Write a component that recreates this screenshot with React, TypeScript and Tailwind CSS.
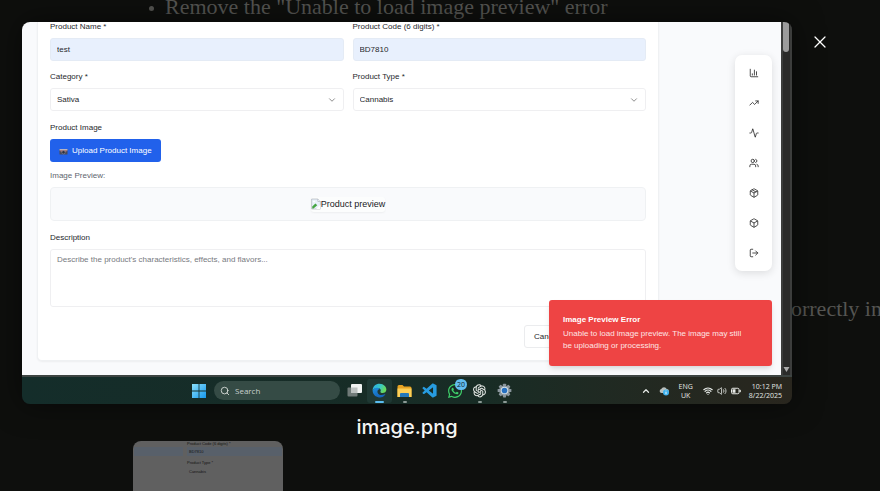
import type { ReactNode } from "react";
import {
  Activity,
  Box,
  ChartColumn,
  ChevronDown,
  ChevronUp,
  LogOut,
  Package,
  Search,
  TrendingUp,
  Users,
  Volume2,
  Wifi,
  X,
} from "lucide-react";
import { AiOutlineOpenAI } from "react-icons/ai";
import { BiLogoVisualStudio } from "react-icons/bi";
import { FaWhatsapp } from "react-icons/fa";

function Field({ id, label, children }: { id: string; label: string; children: ReactNode }) {
  return (
    <div className="flex flex-col gap-[6px]">
      <label htmlFor={id} className="text-[#26282c]">
        {label}
      </label>
      {children}
    </div>
  );
}

function TextField({ id, label, value }: { id: string; label: string; value: string }) {
  return (
    <Field id={id} label={label}>
      <input
        id={id}
        defaultValue={value}
        className="h-[23px] w-full rounded-[3px] border border-[#e4ebf5] bg-[#e8f0fd] px-[6px] text-[#26282c] outline-none"
      />
    </Field>
  );
}

function SelectField({ id, label, value }: { id: string; label: string; value: string }) {
  return (
    <Field id={id} label={label}>
      <div className="relative">
        <select
          id={id}
          className="h-[23px] w-full appearance-none rounded-[3px] border border-[#efeff1] bg-white px-[6px] text-[#26282c] outline-none"
        >
          <option>{value}</option>
        </select>
        <ChevronDown
          size={10}
          className="pointer-events-none absolute top-[7px] right-[7px] text-[#777]"
        />
      </div>
    </Field>
  );
}

function CameraIcon() {
  return (
    <svg width="9" height="9" viewBox="0 0 18 18" aria-hidden="true">
      <rect x="1" y="6" width="16" height="11" rx="1" fill="#4a4a58" />
      <rect x="1" y="6" width="16" height="3" fill="#b9b4c0" />
      <rect x="3" y="9" width="12" height="2" fill="#d27a72" />
      <circle cx="9" cy="12.5" r="3.4" fill="#2d3042" stroke="#9aa0b5" />
    </svg>
  );
}

function BrokenImageIcon() {
  return (
    <svg width="10" height="12" viewBox="0 0 16 18" aria-hidden="true">
      <path d="M1 1h10l4 4v12H1z" fill="#e8f0fb" stroke="#a7adb5" />
      <path d="M11 1v4h4" fill="#fff" stroke="#a7adb5" />
      <path d="M2 13l5-5 3 3-6 5H2z" fill="#45a543" />
      <path d="M8 17l7-7v7z" fill="#fff" />
      <path d="M3 5c1-2 4-1 4 1H3z" fill="#fff" />
    </svg>
  );
}

function ProductForm() {
  return (
    <form className="min-w-0 flex-1 rounded-b-[5px] border-x border-b border-[#eff1f3] bg-white px-[12px] pb-[12px] text-[8px] leading-[10px] shadow-xs">
      <div className="grid grid-cols-2 gap-x-[9px] gap-y-[11px]">
        <TextField id="name" label="Product Name *" value="test" />
        <TextField id="code" label="Product Code (6 digits) *" value="BD7810" />
        <SelectField id="category" label="Category *" value="Sativa" />
        <SelectField id="type" label="Product Type *" value="Cannabis" />
      </div>

      <p className="mt-[12px] text-[#26282c]">Product Image</p>
      <button
        type="button"
        className="mt-[6px] flex h-[23px] items-center gap-[4px] rounded-[3px] bg-[#2161eb] px-[9px] text-white"
      >
        <CameraIcon />
        Upload Product Image
      </button>
      <p className="mt-[9px] text-[#60656e]">Image Preview:</p>
      <div className="mt-[6px] flex h-[34px] items-center justify-center rounded-[4px] border border-[#eff1f3] bg-[#f9fafc]">
        <div className="flex h-[15px] items-center rounded-[3px] bg-[#fcfdfd] text-[9px] text-[#202124] shadow-xs">
          <BrokenImageIcon />
          Product preview
        </div>
      </div>

      <div className="mt-[12px]">
        <Field id="description" label="Description">
          <textarea
            id="description"
            placeholder="Describe the product's characteristics, effects, and flavors..."
            className="block h-[58px] w-full resize-none rounded-[3px] border border-[#efeff1] bg-white px-[6px] py-[5px] outline-none placeholder:text-[#777a80]"
          />
        </Field>
      </div>

      <div className="mt-[18px] flex justify-end">
        <button
          type="button"
          className="h-[23px] w-[122px] rounded-[3px] border border-[#ebecee] bg-white px-[9px] text-left text-[#26282c]"
        >
          Cancel
        </button>
      </div>
    </form>
  );
}

const sideLinks = [
  { name: "Dashboard", Icon: ChartColumn },
  { name: "Trends", Icon: TrendingUp },
  { name: "Activity", Icon: Activity },
  { name: "Users", Icon: Users },
  { name: "Orders", Icon: Package },
  { name: "Products", Icon: Box },
  { name: "Log out", Icon: LogOut },
];

function SideNav() {
  return (
    <nav className="mt-[33px] mr-[9px] ml-[76px] flex w-[37px] flex-col self-start rounded-[7px] bg-white py-[3px] shadow-[0_2px_8px_rgba(0,0,0,0.12)]">
      {sideLinks.map(({ name, Icon }) => (
        <a
          key={name}
          href="#"
          aria-label={name}
          className="flex h-[30px] items-center justify-center text-[#2b2b2b]"
        >
          <Icon size={10} strokeWidth={2} />
        </a>
      ))}
    </nav>
  );
}

function Toast() {
  return (
    <div
      role="alert"
      className="absolute right-[9px] bottom-[9px] w-[223px] rounded-[3px] bg-[#ee4444] px-[14px] py-[14px] text-[8px] leading-[12px] text-[#fde4e4] shadow-md"
    >
      <p className="mb-[2px] font-bold text-white">Image Preview Error</p>
      <p>
        Unable to load image preview. The image may still
        <br />
        be uploading or processing.
      </p>
    </div>
  );
}

function WindowsLogo() {
  return (
    <svg width="14" height="14" viewBox="0 0 14 14" aria-hidden="true">
      <defs>
        <linearGradient id="win" x1="0" y1="0" x2="1" y2="1">
          <stop offset="0" stopColor="#8be0fb" />
          <stop offset="1" stopColor="#1597ec" />
        </linearGradient>
      </defs>
      <path d="M0 0h6.6v6.6H0zM7.4 0H14v6.6H7.4zM0 7.4h6.6V14H0zM7.4 7.4H14V14H7.4z" fill="url(#win)" />
    </svg>
  );
}

function TaskViewIcon() {
  return (
    <svg width="15" height="15" viewBox="0 0 15 15" aria-hidden="true">
      <rect x="0.5" y="4.5" width="10" height="9" rx="1" fill="#707a78" />
      <rect x="4" y="1" width="11" height="9" rx="1" fill="#f1f3f2" />
      <rect x="4" y="4.5" width="6.5" height="5.5" fill="#bcc1c0" />
    </svg>
  );
}

function EdgeLogo() {
  return (
    <svg width="15" height="15" viewBox="0 0 24 24" aria-hidden="true">
      <defs>
        <linearGradient id="edgeTop" x1="0" y1="0" x2="1" y2="0.4">
          <stop offset="0" stopColor="#27a8e8" />
          <stop offset="0.6" stopColor="#3bc9c1" />
          <stop offset="1" stopColor="#69d95a" />
        </linearGradient>
        <linearGradient id="edgeBody" x1="0" y1="0" x2="0.6" y2="1">
          <stop offset="0" stopColor="#1d90dd" />
          <stop offset="1" stopColor="#1562b8" />
        </linearGradient>
      </defs>
      <path d="M1 12C1 5 6 1 12 1c7 0 11 5 11 9.5 0 4-3 5.500-6 5.500-2.500 0-4-1-3.500-2 1.500-3 0-6-4.500-6-4 0-7 2-8 4z" fill="url(#edgeTop)" />
      <path d="M1 12c1-3 4-5 8-4.500 2 .3 3 1 3.500 2C9.500 10 8 12.500 9 15.500c1.200 3.500 6 5 11.500 2.500.8-.3 1 .2.600.8C18 23 14 23.500 11 23 5 22.300 1 17.500 1 12z" fill="url(#edgeBody)" />
    </svg>
  );
}

function FolderIcon() {
  return (
    <svg width="15" height="14" viewBox="0 0 15 14" aria-hidden="true">
      <path d="M0.5 2.5a1.500 1.500 0 0 1 1.500-1.500h3.500l1.500 1.500h6a1.500 1.500 0 0 1 1.500 1.500v9h-14z" fill="#e7a323" />
      <path d="M0.5 4.5h14V13h-14z" fill="#fccf57" />
      <path d="M3 13v-3a1 1 0 0 1 1-1h7a1 1 0 0 1 1 1v3z" fill="#2378ba" />
    </svg>
  );
}

function GearIcon() {
  return (
    <svg width="15" height="15" viewBox="0 0 24 24" aria-hidden="true">
      <g fill="#8b969d">
        <circle cx="12" cy="12" r="8.5" />
        {[0, 45, 90, 135].map((a) => (
          <rect key={a} x="9.5" y="1" width="5" height="22" rx="1" transform={`rotate(${a} 12 12)`} />
        ))}
      </g>
      <circle cx="12" cy="12" r="6" fill="#d8e3e9" />
      <circle cx="12" cy="12" r="4.5" fill="#2670c0" />
    </svg>
  );
}

function CloudIcon() {
  return (
    <svg width="10" height="10" viewBox="0 0 20 20" aria-hidden="true">
      <path d="M5 14a4 4 0 0 1-.5-7.900A6 6 0 0 1 15.500 6 4 4 0 0 1 16 14z" fill="#b9bfbd" />
      <circle cx="14" cy="13" r="6" fill="#3fb2ee" />
      <path d="M14 9.200v1.600M14 12v4.500" stroke="#fff" strokeWidth="1.8" />
    </svg>
  );
}

function BatteryIcon() {
  return (
    <svg width="10" height="8" viewBox="0 0 20 14" aria-hidden="true">
      <rect x="1" y="1.5" width="15" height="11" rx="2.5" fill="none" stroke="#e8eae6" strokeWidth="2" />
      <rect x="3" y="3.5" width="6" height="7" fill="#e8eae6" />
      <path d="M17.500 5v4h1.500V5z" fill="#e8eae6" stroke="#e8eae6" />
    </svg>
  );
}

function AppButton({ name, mark, children }: { name: string; mark?: "active" | "open"; children: ReactNode }) {
  return (
    <button
      type="button"
      aria-label={name}
      className={`relative flex h-[24px] w-[25px] items-center justify-center rounded-[3px] ${mark === "active" ? "bg-[#1f3833]" : ""}`}
    >
      {children}
      {mark === "active" && (
        <span className="absolute bottom-0 left-[8px] h-[2px] w-[9px] rounded-full bg-[#5bbcf0]" />
      )}
      {mark === "open" && (
        <span className="absolute bottom-0 left-[11px] h-[2px] w-[4px] rounded-full bg-[#8d9a96]" />
      )}
    </button>
  );
}

function Taskbar() {
  return (
    <div className="flex h-[29px] items-center border-t-2 border-[#3d4442] bg-linear-to-r from-[#142d2a] via-[#182c25] via-60% to-[#29261e] pr-[10px] pl-[164px] font-['Open_Sans','Noto_Sans',sans-serif] text-[7px] leading-[9px] text-[#e4e8e5]">
      <AppButton name="Start">
        <WindowsLogo />
      </AppButton>
      <label className="mr-[2px] ml-[3px] flex h-[19px] w-[126px] items-center gap-[5px] rounded-full bg-[#354b45] px-[6px]">
        <Search size={10} className="shrink-0" />
        <input
          type="text"
          aria-label="Search"
          placeholder="Search"
          className="w-full min-w-0 text-[8px] outline-none placeholder:text-[#c8d0cd]"
        />
      </label>
      <AppButton name="Task view">
        <TaskViewIcon />
      </AppButton>
      <AppButton name="Edge" mark="active">
        <EdgeLogo />
      </AppButton>
      <AppButton name="File Explorer" mark="open">
        <FolderIcon />
      </AppButton>
      <AppButton name="Visual Studio Code">
        <BiLogoVisualStudio size={17} className="text-[#279ce0]" />
      </AppButton>
      <AppButton name="WhatsApp">
        <FaWhatsapp size={16} className="text-[#3fd06a]" />
        <span className="absolute top-0 right-0 rounded-full bg-[#63bdf0] px-[2px] py-px text-[7px] text-[#10242f]">
          20
        </span>
      </AppButton>
      <AppButton name="ChatGPT" mark="open">
        <AiOutlineOpenAI size={17} />
      </AppButton>
      <AppButton name="Settings" mark="open">
        <GearIcon />
      </AppButton>

      <div className="ml-auto flex items-center">
        <ChevronUp size={10} strokeWidth={3} />
        <span className="ml-[8px]">
          <CloudIcon />
        </span>
        <p className="ml-[10px] text-center">
          ENG
          <br />
          UK
        </p>
        <Wifi size={10} strokeWidth={3} className="ml-[10px]" />
        <Volume2 size={10} className="ml-[4px]" />
        <span className="ml-[4px]">
          <BatteryIcon />
        </span>
        <p className="ml-[8px] text-right">
          10:12 PM
          <br />
          8/22/2025
        </p>
      </div>
    </div>
  );
}

function PreviewWindow() {
  return (
    <div className="overflow-hidden rounded-[8px] shadow-[0_0_30px_rgba(0,0,0,0.5)]">
      <div className="flex">
        <div className="relative flex min-w-0 flex-1 bg-[#f9fafc] pb-[14px] pl-[15px]">
          <ProductForm />
          <SideNav />
          <Toast />
        </div>
        <div className="flex w-[11px] flex-col items-start justify-between border-x-2 border-[#3c3d3c] bg-[#2b2b2a] pb-[3px]">
          <div className="h-[30px] w-[6px] rounded-b-full bg-[#9c9c9c]" />
          <svg width="7" height="5" viewBox="0 0 7 5" aria-hidden="true">
            <path d="M0.5 0h6L3.500 5z" fill="#aaa" />
          </svg>
        </div>
      </div>
      <Taskbar />
    </div>
  );
}

function Thumbnail() {
  return (
    <div className="h-[60px] w-[150px] overflow-hidden rounded-t-[8px] bg-[#606060] text-[4px] leading-[5px] text-[#151515]">
      <div className="pl-[54px]">Product Code (6 digits) *</div>
      <div className="mt-[1px] grid grid-cols-[49px_1fr] gap-[4px] px-[1px]">
        <div className="h-[9px] bg-[#58606a]" />
        <div className="h-[9px] bg-[#58606a] px-[2px] py-[2px]">BD7810</div>
      </div>
      <div className="mt-[4px] pl-[54px]">Product Type *</div>
      <div className="mt-[4px] pl-[56px]">Cannabis</div>
    </div>
  );
}

export default function App() {
  return (
    <div className="relative h-screen overflow-hidden bg-[#0e0f0d] font-['Liberation_Sans',Arial,sans-serif]">
      <main className="flex h-full flex-col">
        <ul className="pl-[149px] font-['Liberation_Serif',serif] text-[22px] leading-[28px] text-[#555552]">
          <li className="-mt-[7px] flex items-center gap-[11px]">
            <span className="mt-[3px] size-[5px] rounded-full bg-[#555552]" />
            Remove the "Unable to load image preview" error
          </li>
        </ul>
        <p className="mt-[274px] -mr-[2px] self-end font-['Liberation_Serif',serif] text-[22px] leading-[28px] whitespace-nowrap text-[#555552]">
          correctly in
        </p>
        <div className="mt-auto -mb-[10px] pl-[133px]">
          <Thumbnail />
        </div>
      </main>

      <div role="dialog" aria-label="image.png" className="absolute inset-0 flex items-start pt-[22px] pl-[22px]">
        <figure className="min-w-0 flex-1">
          <PreviewWindow />
          <figcaption className="mt-[9px] text-center font-['Inter',sans-serif] text-[20px] leading-[28px] font-medium text-[#f5f5f3]">
            image.png
          </figcaption>
        </figure>
        <div className="w-[88px] pt-[10px] pl-[18px]">
          <button type="button" aria-label="Close" className="flex size-[20px] items-center justify-center text-white">
            <X size={22} strokeWidth={1.5} />
          </button>
        </div>
      </div>
    </div>
  );
}
